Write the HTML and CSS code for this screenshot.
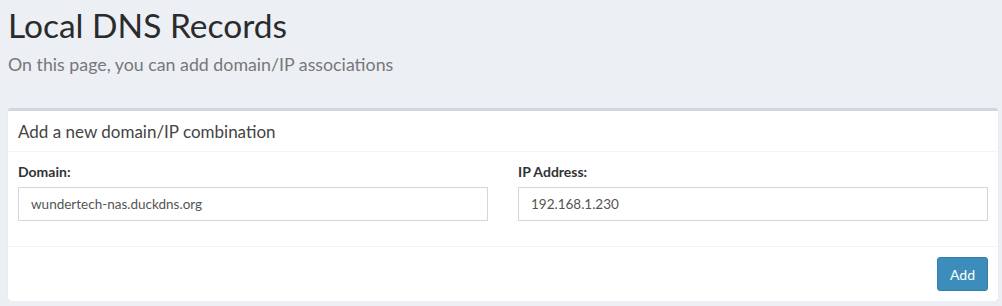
FILE: index.html
```html
<!doctype html>
<html>
<head>
 <title>Local DNS Records</title>
 <meta name=viewport content="width=device-width, initial-scale=1">
 <link rel="stylesheet" href="styles.css">
</head>
<body>
<section class=content-header>
 <h1>Local DNS Records</h1>
 <p class=lead>On this page, you can add domain/IP associations</p>
</section>
<div class=box>
 <div class=box-header>
  <h3 class=box-title>Add a new domain/IP combination</h3>
 </div>
 <div class=box-body>
  <div class=row>
   <div class=form-group>
    <label for=domain>Domain:</label>
    <input id=domain class=form-control value="wundertech-nas.duckdns.org">
   </div>
   <div class=form-group>
    <label for=ip>IP Address:</label>
    <input id=ip class=form-control value="192.168.1.230">
   </div>
  </div>
 </div>
 <div class=box-footer>
  <button class=btn-primary>Add</button>
 </div>
</div>
</body>
</html>
```

FILE: styles.css
```css
body {margin:0; background:#ecf0f5; font-family: Lato, "Open Sans", sans-serif; color:#333;}
.content-header {padding: 5px 8px 0;}
.content-header h1 {margin:0; font-size:33.5px; font-weight:400; line-height:40px; color:#2b2b2b;}
.lead {margin:7px 0 0; font-size:17.8px; line-height:24px; color:#777;}
.box {
  margin: 32px 4px 0 8px;
  background:#fff;
  border-top:3px solid #d2d6de;
  border-radius:3px;
  box-shadow:0 1px 1px rgba(0,0,0,0.12);
}
.box-header {height:40px; padding:0 10px; display:flex; align-items:center; border-bottom:1px solid #f4f4f4;}
.box-title {margin:0; font-size:17px; font-weight:400; color:#444;}
.box-body {padding:10px 10px 10px;}
.row {display:grid; grid-template-columns:1fr 1fr; column-gap:30px;}
.form-group {margin-bottom:15px;}
label {display:block; font-size:14px; font-weight:700; line-height:20px; margin-bottom:5px; color:#333;}
.form-control {
  display:block;
  box-sizing:border-box;
  width:100%;
  height:34px;
  padding:6px 12px;
  border:1px solid #d2d6de;
  border-radius:0;
  font-family:inherit;
  font-size:13.5px;
  color:#555;
  outline:none;
}
.box-footer {border-top:1px solid #f4f4f4; padding:10px; display:flex; justify-content:flex-end;}
.btn-primary {
  height:34px;
  padding:6px 12px;
  border:1px solid #367fa9;
  border-radius:3px;
  background-color:#3c8dbc;
  color:#fff;
  font-family:inherit;
  font-size:14px;
}
```
